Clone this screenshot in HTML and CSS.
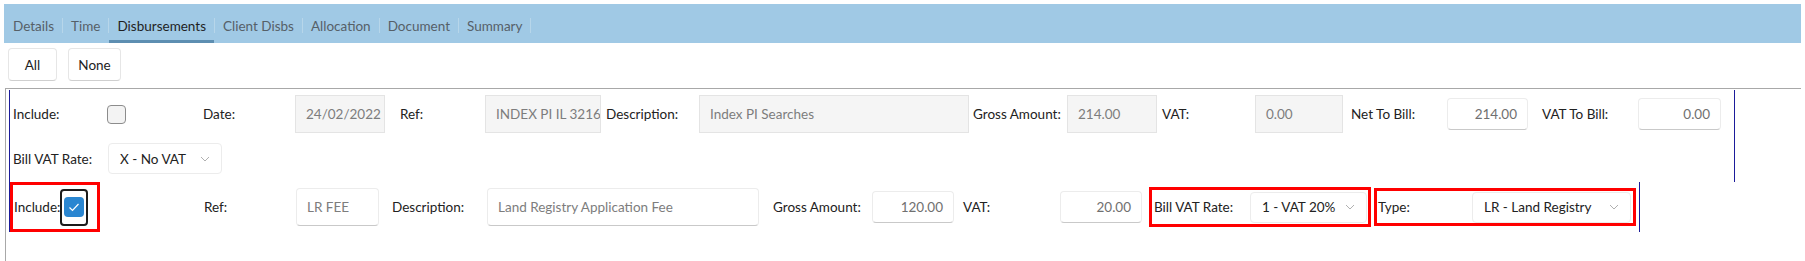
FILE: index.html
```html
<!DOCTYPE html>
<html>
<head>
<meta charset="utf-8">
<link rel="stylesheet" href="styles.css">
</head>
<body>
<div class="tabbar">
  <div class="tab">Details</div><span class="sep"></span>
  <div class="tab">Time</div><span class="sep"></span>
  <div class="tab active">Disbursements</div><span class="sep"></span>
  <div class="tab">Client Disbs</div><span class="sep"></span>
  <div class="tab">Allocation</div><span class="sep"></span>
  <div class="tab">Document</div><span class="sep"></span>
  <div class="tab">Summary</div><span class="sep"></span>
</div>
<div class="toolbar">
  <button class="btn b-all">All</button>
  <button class="btn b-none">None</button>
</div>
<div class="list">
  <div class="rec rec1">
    <div class="row">
      <span class="lbl w94">Include:</span>
      <span class="cbcell"><span class="cb"></span></span>
      <span class="lbl w92">Date:</span>
      <span class="ro c-date">24/02/2022</span>
      <span class="lbl w85">Ref:</span>
      <span class="ro c-ref">INDEX PI IL 3216</span>
      <span class="lbl w93">Description:</span>
      <span class="ro c-desc">Index PI Searches</span>
      <span class="lbl w94">Gross Amount:</span>
      <span class="ro c-gross">214.00</span>
      <span class="lbl w93">VAT:</span>
      <span class="ro c-vat">0.00</span>
      <span class="lbl w96">Net To Bill:</span>
      <span class="ed c-net">214.00</span>
      <span class="lbl w96">VAT To Bill:</span>
      <span class="ed c-vtb">0.00</span>
    </div>
    <div class="row">
      <span class="lbl w95">Bill VAT Rate:</span>
      <span class="sel c-sel1">X - No VAT<svg class="chev" width="10" height="6" viewBox="0 0 10 6"><path d="M1 1l4 4 4-4" stroke="#b0b0b0" fill="none" stroke-width="1"/></svg></span>
    </div>
  </div>
  <div class="rec rec2">
    <div class="row">
      <span class="hl hl-a">
        <span class="lbl">Include:</span>
        <span class="focus"><span class="cb on"><svg width="20" height="20" viewBox="0 0 20 20"><path d="M5.5 10.5l3 3 6-6.5" stroke="#fff" fill="none" stroke-width="1.2"/></svg></span></span>
      </span>
      <span class="lbl w92 m-ref2">Ref:</span>
      <span class="ed2 c-ref2">LR FEE</span>
      <span class="lbl w95">Description:</span>
      <span class="ed2 c-desc2">Land Registry Application Fee</span>
      <span class="lbl w99">Gross Amount:</span>
      <span class="ed c-gross2">120.00</span>
      <span class="lbl w97">VAT:</span>
      <span class="ed c-vat2">20.00</span>
      <span class="hl hl-b">
        <span class="lbl w96">Bill VAT Rate:</span>
        <span class="sel c-sel2">1 - VAT 20%<svg class="chev" width="10" height="6" viewBox="0 0 10 6"><path d="M1 1l4 4 4-4" stroke="#b0b0b0" fill="none" stroke-width="1"/></svg></span>
      </span>
      <span class="hl hl-c">
        <span class="lbl w94">Type:</span>
        <span class="sel c-sel3">LR - Land Registry<svg class="chev" width="10" height="6" viewBox="0 0 10 6"><path d="M1 1l4 4 4-4" stroke="#b0b0b0" fill="none" stroke-width="1"/></svg></span>
      </span>
    </div>
  </div>
</div>
</body>
</html>
```
FILE: styles.css
```css
* { box-sizing: border-box; }
body {
  margin: 4px;
  font-family: Lato, "Noto Sans", sans-serif;
  font-size: 13.5px;
  color: #222;
  background: #fff;
}
.tabbar {
  display: flex;
  align-items: stretch;
  height: 39px;
  background: #a0c9e5;
}
.tab {
  display: flex;
  align-items: center;
  padding: 8px 8px 0;
  color: #566068;
  border-bottom: 3px solid transparent;
}
.tab:first-child { padding-left: 9px; }
.tab.active {
  color: #1f1f1f;
  border-bottom-color: #5d8eb1;
}
.sep {
  width: 1px;
  background: #b7d6ea;
  margin: 14px 0 10px;
}
.toolbar {
  display: flex;
  gap: 11px;
  padding: 5px 4px 0;
  height: 45px;
}
.btn {
  font: inherit;
  color: #222;
  height: 33px;
  background: #fff;
  border: 1px solid #e6e6e6;
  border-bottom-color: #cfcfcf;
  border-radius: 4px;
  padding: 0;
}
.b-all { width: 49px; }
.b-none { width: 53px; }
.list {
  margin-left: 1px;
  border-top: 1px solid #a8a8a8;
  border-left: 1px solid #a8a8a8;
  padding: 1px 0 0 3px;
  height: 174px;
}
.rec {
  border-left: 1px solid #1b1b9a;
  border-right: 1px solid #1b1b9a;
}
.rec1 {
  width: 1726px;
  padding: 5px 0 8px 3px;
  display: flex;
  flex-direction: column;
  gap: 10px;
}
.rec2 {
  width: 1631px;
  padding: 0;
}
.row {
  display: flex;
  align-items: center;
}
.rec1 .row:first-child { height: 38px; }
.lbl { flex: none; white-space: nowrap; color: #222; }
.w85 { width: 85px; }
.w92 { width: 92px; }
.w93 { width: 93px; }
.w94 { width: 94px; }
.w95 { width: 95px; }
.w96 { width: 96px; }
.w97 { width: 97px; }
.w99 { width: 99px; }
.cbcell { width: 96px; display: flex; }
.cb {
  width: 19px;
  height: 19px;
  border: 1px solid #8c8c8c;
  border-radius: 4px;
  background: #f3f3f3;
  display: block;
}
.cb.on {
  width: 20px;
  height: 20px;
  border: none;
  background: #2a86d1;
}
.cb.on svg { display: block; }
.focus {
  display: flex;
  padding: 6px 2px 7px;
  border: 2px solid #1c1c1c;
  border-radius: 4px;
}
.ro, .ed, .ed2, .sel {
  flex: none;
  display: flex;
  align-items: center;
  white-space: nowrap;
  overflow: hidden;
}
.ro {
  height: 38px;
  background: #f5f5f5;
  border: 1px solid #e4e4e4;
  padding: 0 10px;
  color: #7d7d7d;
}
.ed {
  height: 32px;
  background: #fff;
  border: 1px solid #ececec;
  border-bottom-color: #c9c9c9;
  border-radius: 4px;
  padding: 0 10px;
  color: #707070;
  justify-content: flex-end;
}
.ed2 {
  height: 38px;
  background: #fff;
  border: 1px solid #ececec;
  border-bottom-color: #c9c9c9;
  border-radius: 4px;
  padding: 0 10px;
  color: #7d7d7d;
}
.sel {
  height: 31px;
  background: #fff;
  border: 1px solid #ececec;
  border-radius: 4px;
  padding: 0 11px;
  color: #222;
  justify-content: space-between;
}
.chev { flex: none; }
.c-date { width: 90px; margin-right: 15px; }
.c-ref { width: 116px; margin-right: 5px; }
.c-desc { width: 270px; margin-right: 4px; }
.c-gross { width: 90px; margin-right: 5px; }
.c-vat { width: 88px; margin-right: 8px; }
.c-net { width: 81px; margin-right: 14px; }
.c-vtb { width: 83px; }
.c-sel1 { width: 114px; }
.hl {
  display: flex;
  align-items: center;
  border: 3px solid #f00;
}
.hl-a { width: 90px; height: 50px; padding-left: 1px; }
.hl-b { width: 222px; height: 40px; padding-left: 2px; margin-right: 3px; }
.hl-c { width: 262px; height: 38px; padding-left: 1px; }
.m-ref2 { margin-left: 104px; }
.c-ref2 { width: 83px; margin-right: 13px; }
.c-desc2 { width: 272px; margin-right: 14px; }
.c-gross2 { width: 82px; margin-right: 9px; }
.c-vat2 { width: 82px; margin-right: 7px; }
.c-sel2 { width: 117px; }
.c-sel3 { width: 159px; }
```
